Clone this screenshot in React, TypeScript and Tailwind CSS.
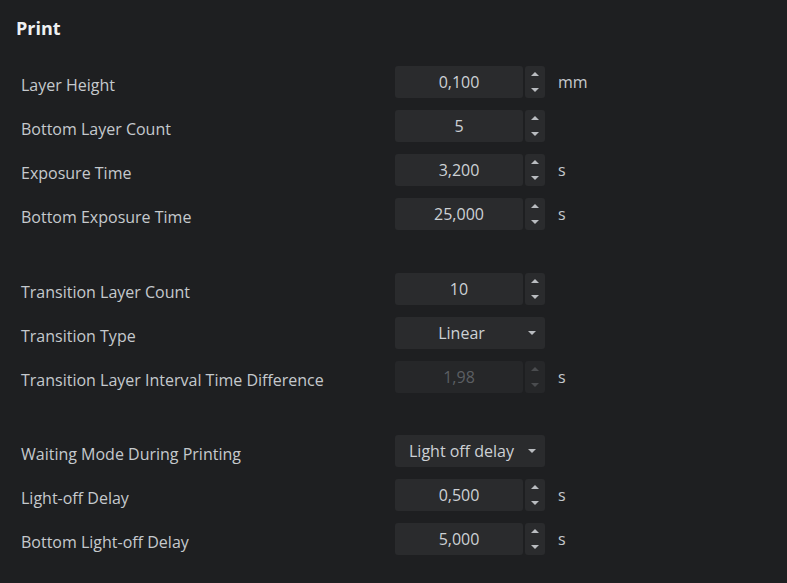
import React from "react";

type Row = {
  label: string;
  value: string;
  kind: "spin" | "select";
  unit?: string;
  disabled?: boolean;
};

const groups: Row[][] = [
  [
    { label: "Layer Height", value: "0,100", kind: "spin", unit: "mm" },
    { label: "Bottom Layer Count", value: "5", kind: "spin" },
    { label: "Exposure Time", value: "3,200", kind: "spin", unit: "s" },
    { label: "Bottom Exposure Time", value: "25,000", kind: "spin", unit: "s" },
  ],
  [
    { label: "Transition Layer Count", value: "10", kind: "spin" },
    { label: "Transition Type", value: "Linear", kind: "select" },
    {
      label: "Transition Layer Interval Time Difference",
      value: "1,98",
      kind: "spin",
      unit: "s",
      disabled: true,
    },
  ],
  [
    { label: "Waiting Mode During Printing", value: "Light off delay", kind: "select" },
    { label: "Light-off Delay", value: "0,500", kind: "spin", unit: "s" },
    { label: "Bottom Light-off Delay", value: "5,000", kind: "spin", unit: "s" },
  ],
];

const Tri = ({ up, dim }: { up?: boolean; dim?: boolean }) => (
  <svg width="8" height="4" viewBox="0 0 8 4" className={dim ? "text-[#4a4c4f]" : "text-[#b9bcc0]"}>
    <path d={up ? "M4 0 L8 4 L0 4 Z" : "M0 0 L8 0 L4 4 Z"} fill="currentColor" />
  </svg>
);

const Field = ({ row }: { row: Row }) => {
  if (row.kind === "select") {
    return (
      <div className="w-[150px] h-[32px] rounded-[3px] bg-[#2a2b2d] flex items-center pr-[9px] text-[16px] text-[#cdd1d5]">
        <span className="flex-1 text-center whitespace-nowrap">{row.value}</span>
        <Tri />
      </div>
    );
  }
  return (
    <div className="flex items-center gap-[2px]">
      <div
        className={`w-[128px] h-[32px] rounded-[3px] flex items-center justify-center text-[16px] ${
          row.disabled ? "bg-[#262729] text-[#5c5f63]" : "bg-[#2a2b2d] text-[#cdd1d5]"
        }`}
      >
        {row.value}
      </div>
      <div
        className={`w-[20px] h-[32px] rounded-[3px] flex flex-col items-center justify-center gap-[12px] ${
          row.disabled ? "bg-[#262729]" : "bg-[#2a2b2d]"
        }`}
      >
        <Tri up dim={row.disabled} />
        <Tri dim={row.disabled} />
      </div>
    </div>
  );
};

export default function App() {
  return (
    <div
      className="w-[787px] h-[583px] bg-[#1e1f21] overflow-hidden"
      style={{ fontFamily: '"Open Sans", "Noto Sans", sans-serif' }}
    >
      <div className="pl-[16px] pt-[14px] text-[18px] font-bold text-[#eef0f2] leading-[28px]">Print</div>
      <div className="pt-[24px] flex flex-col">
        {groups.map((g, gi) => (
          <div
            key={gi}
            className={`flex flex-col gap-[12px] ${gi === 1 ? "mt-[43px]" : gi === 2 ? "mt-[42px]" : ""}`}
          >
            {g.map((r) => (
              <div key={r.label} className="flex items-center h-[32px]">
                <div className="w-[395px] pl-[21px] pt-[6px] text-[16px] text-[#c5c9cd]">{r.label}</div>
                <Field row={r} />
                {r.unit && <div className="ml-[13px] text-[16px] text-[#c5c9cd]">{r.unit}</div>}
              </div>
            ))}
          </div>
        ))}
      </div>
    </div>
  );
}
